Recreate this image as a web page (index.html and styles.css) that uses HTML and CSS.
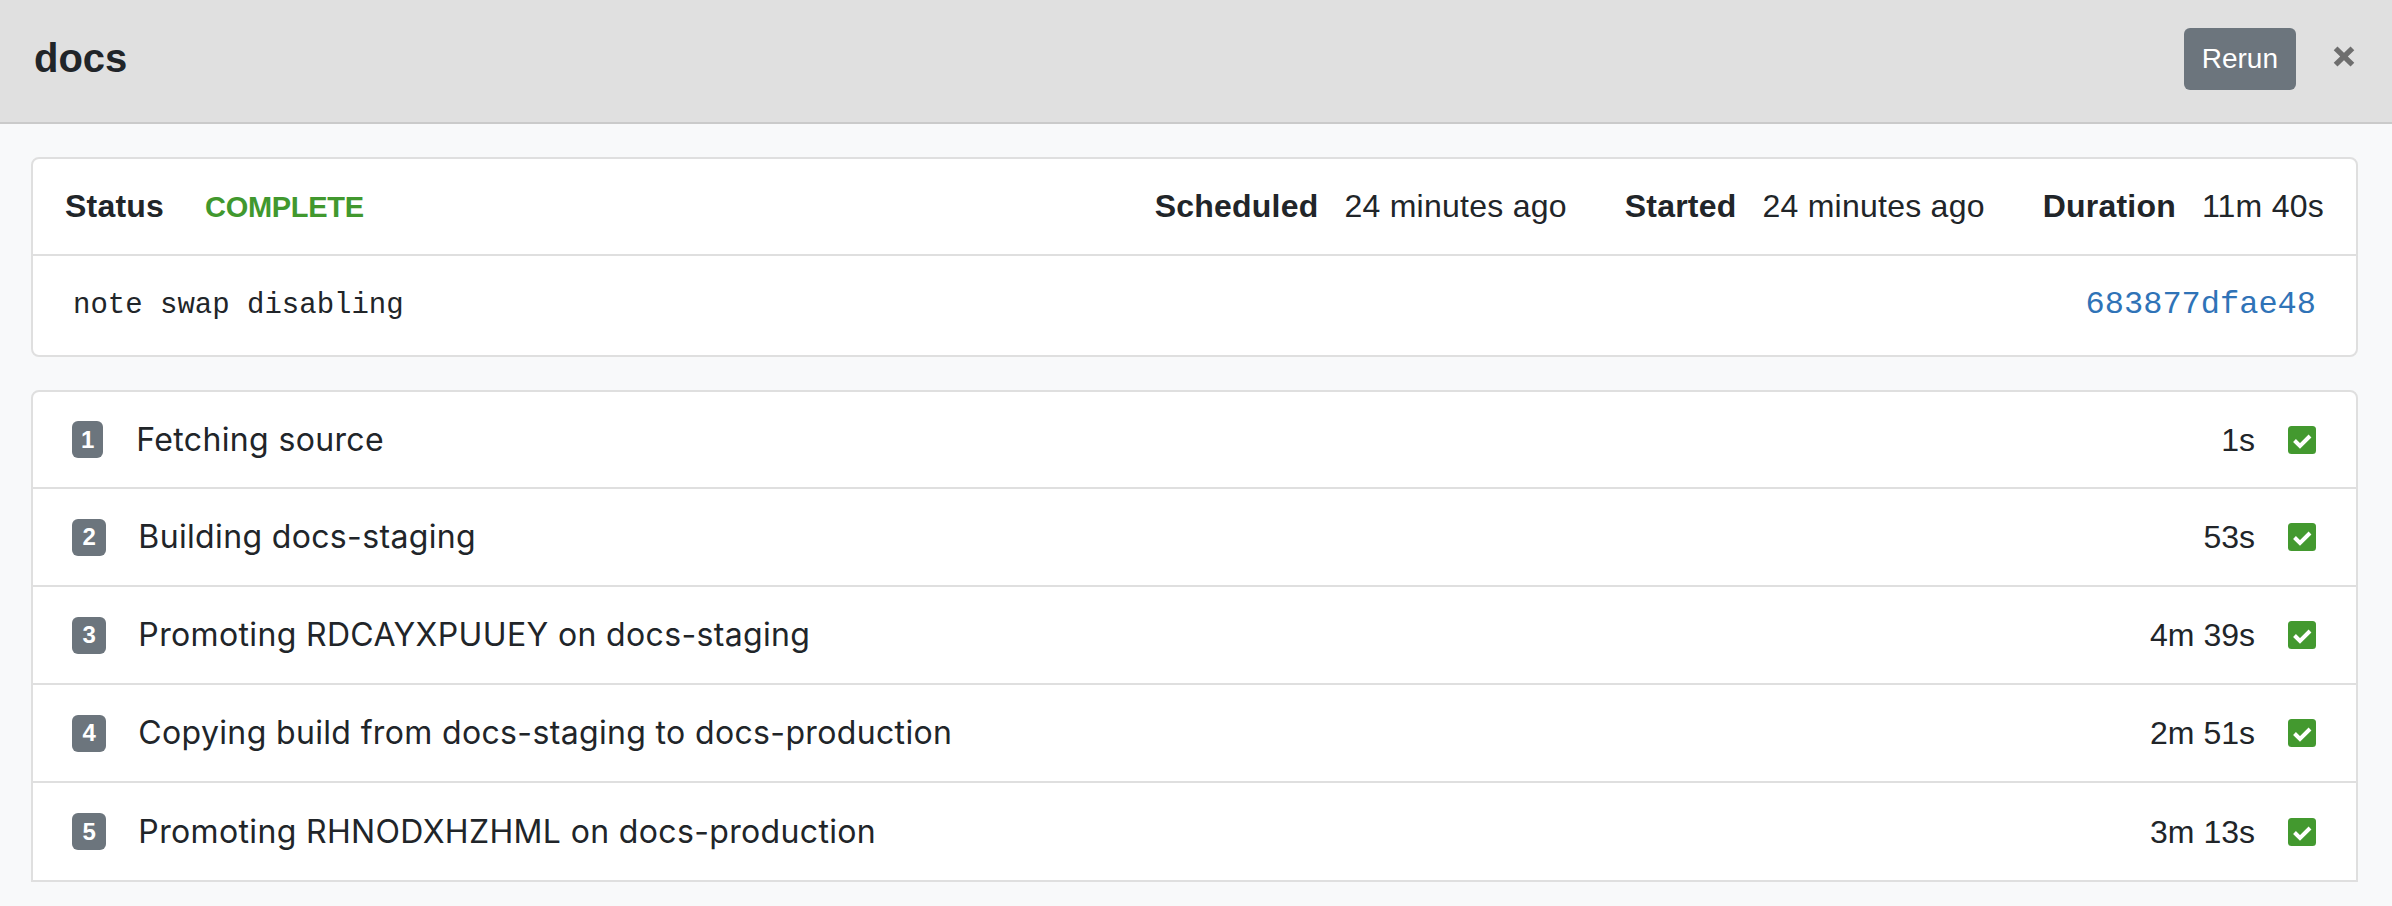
FILE: index.html
```html
<!DOCTYPE html>
<html lang="en">
<head>
<meta charset="utf-8">
<title>docs</title>
<link rel="stylesheet" href="styles.css">
</head>
<body>
<header class="modal-header">
  <h1 class="title">docs</h1>
  <div class="actions">
    <button class="btn-rerun" type="button">Rerun</button>
    <button class="btn-close" type="button" aria-label="Close">
      <svg viewBox="0 0 24 23" width="24" height="23"><path d="M3.6 3.4L20.4 19.6M20.4 3.4L3.6 19.6" stroke="#6e6e6e" stroke-width="5.4" fill="none"/></svg>
    </button>
  </div>
</header>
<main class="modal-body">
  <section class="card summary">
    <div class="summary-head">
      <div class="status">
        <span class="label">Status</span>
        <span class="status-value">COMPLETE</span>
      </div>
      <div class="meta">
        <div class="pair"><span class="label">Scheduled</span><span class="value">24 minutes ago</span></div>
        <div class="pair"><span class="label">Started</span><span class="value">24 minutes ago</span></div>
        <div class="pair"><span class="label">Duration</span><span class="value">11m 40s</span></div>
      </div>
    </div>
    <div class="summary-body">
      <code class="message">note swap disabling</code>
      <a class="sha" href="#">683877dfae48</a>
    </div>
  </section>
  <section class="card steps">
    <div class="step">
      <span class="badge badge-narrow">1</span><span class="step-name">Fetching source</span><span class="duration">1s</span>
      <svg class="check" viewBox="0 0 28 28" width="28" height="28"><rect width="28" height="28" rx="3.5" fill="#43992f"/><path d="M6.5 14.5L12 20L22 10" fill="none" stroke="#fff" stroke-width="4"/></svg>
    </div>
    <div class="step">
      <span class="badge">2</span><span class="step-name">Building docs-staging</span><span class="duration">53s</span>
      <svg class="check" viewBox="0 0 28 28" width="28" height="28"><rect width="28" height="28" rx="3.5" fill="#43992f"/><path d="M6.5 14.5L12 20L22 10" fill="none" stroke="#fff" stroke-width="4"/></svg>
    </div>
    <div class="step">
      <span class="badge">3</span><span class="step-name">Promoting RDCAYXPUUEY on docs-staging</span><span class="duration">4m 39s</span>
      <svg class="check" viewBox="0 0 28 28" width="28" height="28"><rect width="28" height="28" rx="3.5" fill="#43992f"/><path d="M6.5 14.5L12 20L22 10" fill="none" stroke="#fff" stroke-width="4"/></svg>
    </div>
    <div class="step">
      <span class="badge">4</span><span class="step-name">Copying build from docs-staging to docs-production</span><span class="duration">2m 51s</span>
      <svg class="check" viewBox="0 0 28 28" width="28" height="28"><rect width="28" height="28" rx="3.5" fill="#43992f"/><path d="M6.5 14.5L12 20L22 10" fill="none" stroke="#fff" stroke-width="4"/></svg>
    </div>
    <div class="step">
      <span class="badge">5</span><span class="step-name">Promoting RHNODXHZHML on docs-production</span><span class="duration">3m 13s</span>
      <svg class="check" viewBox="0 0 28 28" width="28" height="28"><rect width="28" height="28" rx="3.5" fill="#43992f"/><path d="M6.5 14.5L12 20L22 10" fill="none" stroke="#fff" stroke-width="4"/></svg>
    </div>
  </section>
</main>
</body>
</html>
```

FILE: styles.css
```css
* { box-sizing: border-box; }

html, body {
  margin: 0;
  padding: 0;
  background: #f8f9fa;
  color: #212529;
  font-family: "Liberation Sans", Arial, sans-serif;
  font-size: 32px;
  line-height: 48px;
}

.modal-header {
  display: flex;
  align-items: flex-start;
  justify-content: space-between;
  height: 124px;
  padding: 28px 36px 0 34px;
  background: #e0e0e0;
  border-bottom: 2px solid #cacaca;
}

.title {
  margin: 6px 0 0 0;
  font-size: 40px;
  line-height: 48px;
  font-weight: 700;
  color: #212529;
}

.actions {
  display: flex;
  align-items: flex-start;
}

.btn-rerun {
  height: 62px;
  padding: 0 18px;
  border: none;
  border-radius: 6px;
  background: #6c757d;
  color: #fff;
  font-family: "Liberation Sans", Arial, sans-serif;
  font-size: 28px;
  line-height: 62px;
}

.btn-close {
  display: block;
  margin: 17px 0 0 36px;
  padding: 0;
  border: none;
  background: none;
  width: 24px;
  height: 23px;
}

.btn-close svg { display: block; }

.modal-body {
  padding: 33px 34px 0 31px;
}

.card {
  background: #fff;
  border: 2px solid #dfdfdf;
  border-radius: 8px;
  margin-bottom: 33px;
}

.summary-head {
  display: flex;
  align-items: baseline;
  justify-content: space-between;
  padding: 23px 32px;
  border-bottom: 2px solid #dfdfdf;
}

.status {
  display: flex;
  align-items: baseline;
  gap: 41px;
}

.label {
  font-weight: 700;
  letter-spacing: 0.2px;
}

.value {
  letter-spacing: 0.25px;
}

.status-value {
  font-weight: 700;
  font-size: 29px;
  letter-spacing: -0.3px;
  color: #41982e;
}

.meta {
  display: flex;
  align-items: baseline;
  gap: 58px;
}

.pair {
  display: flex;
  align-items: baseline;
  gap: 26px;
}

.summary-body {
  display: flex;
  align-items: baseline;
  justify-content: space-between;
  padding: 25px 40px 25px 40px;
}

.message {
  font-family: "Liberation Mono", "Courier New", monospace;
  font-size: 29px;
  line-height: 48px;
  color: #212529;
}

.sha {
  font-family: "Liberation Mono", "Courier New", monospace;
  font-size: 32px;
  line-height: 48px;
  color: #2f73b7;
  text-decoration: none;
}

.steps {
  border-radius: 8px 8px 0 0;
}

.step {
  display: flex;
  align-items: center;
  height: 98px;
  padding: 0 40px 0 39px;
  border-bottom: 2px solid #dfdfdf;
}

.step:first-child {
  height: 97px;
}

.step:last-child {
  height: 97px;
  border-bottom: none;
}

.badge {
  display: inline-flex;
  align-items: center;
  justify-content: center;
  height: 37px;
  min-width: 31px;
  padding: 0 10.5px;
  border-radius: 6px;
  background: #6c757d;
  color: #fff;
  font-size: 24px;
  line-height: 24px;
  font-weight: 700;
}

.badge-narrow {
  padding: 0 9px;
}

.step-name {
  margin-left: 32px;
  font-family: Inter, "Liberation Sans", sans-serif;
  font-size: 32px;
  line-height: 48px;
  letter-spacing: 0.35px;
  color: #212529;
}

.badge-narrow + .step-name {
  margin-left: 33px;
}

.duration {
  margin-left: auto;
  font-size: 32px;
  line-height: 48px;
}

.check {
  display: block;
  margin-left: 33px;
  flex-shrink: 0;
}
```
